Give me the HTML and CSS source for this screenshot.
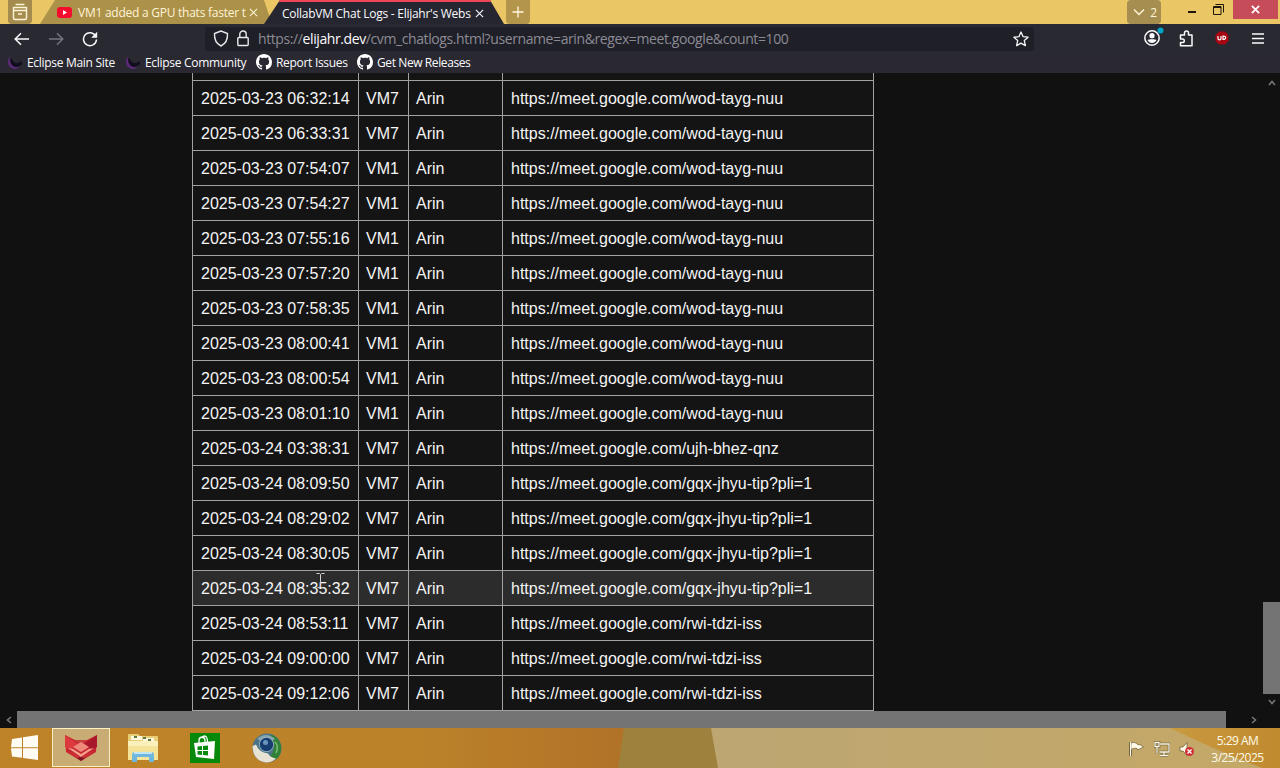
FILE: index.html
```
<!DOCTYPE html>
<html lang="en">
<head>
    <meta charset="UTF-8">
    <meta name="viewport" content="width=device-width, initial-scale=1.0">
    <title>CollabVM Chat Logs - Elijahr's Website</title>
    <link rel="stylesheet" href="styles.css">
</head>
<body>
    <!-- Shared icons -->
    <svg class="defs" width="0" height="0">
        <symbol id="github" viewBox="0 0 16 16">
            <path fill="#fff" d="M8 0C3.58 0 0 3.58 0 8c0 3.54 2.29 6.53 5.47 7.59.4.07.55-.17.55-.38 0-.19-.01-.82-.01-1.49-2.01.37-2.53-.49-2.69-.94-.09-.23-.48-.94-.82-1.13-.28-.15-.68-.52-.01-.53.63-.01 1.08.58 1.23.82.72 1.21 1.87.87 2.33.66.07-.52.28-.87.51-1.07-1.78-.2-3.64-.89-3.64-3.95 0-.87.31-1.59.82-2.15-.08-.2-.36-1.02.08-2.12 0 0 .67-.21 2.2.82.64-.18 1.32-.27 2-.27s1.36.09 2 .27c1.53-1.04 2.2-.82 2.2-.82.44 1.1.16 1.92.08 2.12.51.56.82 1.27.82 2.15 0 3.07-1.87 3.75-3.65 3.95.29.25.54.73.54 1.48 0 1.07-.01 1.93-.01 2.2 0 .21.15.46.55.38A8.01 8.01 0 0 0 16 8c0-4.42-3.58-8-8-8z"/>
        </symbol>
        <symbol id="moon" viewBox="0 0 16 16">
            <path d="M3.500 2Q-1.500 8 3 13q5 4 10 0-5 1-8-2.500Q2 7 3.500 2z" fill="#5b2a78"/>
            <path d="M4 3Q2 9 6 12q5 2.500 9-2 0-2-1-3-2 3-5.500 2Q5 7.500 4 3z" fill="#120c1f"/>
        </symbol>
        <symbol id="close" viewBox="0 0 10 10">
            <path d="M1 1l8 8M9 1l-8 8" stroke="currentColor" stroke-width="1.2" fill="none"/>
        </symbol>
    </svg>

    <!-- Tab strip -->
    <div class="tabbar">
        <div class="recent">
            <svg width="18" height="18" viewBox="0 0 18 18" fill="none" stroke="#fff5d8" stroke-width="1.400" stroke-linejoin="round"><path d="M4.500 1.500h9M2.500 4.500h13v3h-13zM2.500 7.500v7.500q0 1.500 1.500 1.500h10q1.500 0 1.500-1.500V7.500M7 11h4"/></svg>
        </div>
        <div class="tab tab-back">
            <svg width="15" height="11" viewBox="0 0 15 11"><rect width="15" height="11" rx="3" fill="#f50d2d"/><path d="M6 3v5l4-2.5z" fill="#fff"/></svg>
            <span class="tab-title">VM1 added a GPU thats faster t</span>
            <svg class="tab-close" width="9" height="9"><use href="#close"/></svg>
        </div>
        <div class="tab tab-front">
            <span class="tab-title">CollabVM Chat Logs - Elijahr's Webs</span>
            <svg class="tab-close" width="9" height="9"><use href="#close"/></svg>
        </div>
        <div class="newtab">
            <svg width="12" height="12" viewBox="0 0 12 12" stroke="#fff8e0" stroke-width="1.3"><path d="M6 .5v11M.5 6h11"/></svg>
        </div>
        <div class="alltabs">
            <svg width="12" height="8" viewBox="0 0 12 8" fill="none" stroke="#fff5d8" stroke-width="1.4"><path d="M1 1.5l5 5 5-5"/></svg>
            <span>2</span>
        </div>
        <div class="window-buttons">
            <svg width="8" height="24" viewBox="0 0 8 24"><path d="M0 12h8" stroke="#1d160c" stroke-width="2"/></svg>
            <svg class="restore" width="11" height="24" viewBox="0 0 11 24" fill="none" stroke="#1d160c"><path d="M.5 6.500h7.500v8H.5zM.5 7.500h7.500M2.500 4.500h8v8"/></svg>
            <div class="win-close"><svg width="9" height="9" viewBox="0 0 10 10"><path d="M1 1l8 8M9 1l-8 8" stroke="#fff" stroke-width="1.900"/></svg></div>
        </div>
    </div>

    <!-- Navigation -->
    <div class="navbar">
        <div class="nav-left">
            <svg width="16" height="14" viewBox="0 0 16 14" fill="none" stroke="#fbfbfe" stroke-width="1.5"><path d="M15 7H1.5M7 1.2L1.2 7 7 12.8"/></svg>
            <svg width="16" height="14" viewBox="0 0 16 14" fill="none" stroke="#77767e" stroke-width="1.4"><path d="M1 7h13.5M9 1.2L14.8 7 9 12.8"/></svg>
            <svg width="16" height="16" viewBox="0 0 16 16"><path d="M13.7 5A6.5 6.5 0 1 0 14.5 8.5" fill="none" stroke="#fbfbfe" stroke-width="1.5"/><path d="M15.2.8v6H9.2z" fill="#fbfbfe"/></svg>
        </div>
        <div class="urlbar">
            <svg width="16" height="17" viewBox="0 0 16 17" fill="none" stroke="#e8e8ee" stroke-width="1.4"><path d="M8 1L1.5 3.5C1.2 9 3 13.5 8 16c5-2.5 6.8-7 6.5-12.5z"/></svg>
            <svg width="12" height="17" viewBox="0 0 12 17" fill="none" stroke="#e8e8ee" stroke-width="1.4"><rect x=".8" y="7.5" width="10.4" height="8" rx="1"/><path d="M2.8 7.5V4.2a3.2 3.2 0 0 1 6.4 0v3.3"/></svg>
            <span class="url">https://<b>elijahr.dev</b>/cvm_chatlogs.html?username=arin&amp;regex=meet.google&amp;count=100</span>
            <svg class="star" width="16" height="16" viewBox="0 0 16 16" fill="none" stroke="#f4f4fa" stroke-width="1.3" stroke-linejoin="round"><path d="M8 1l2.1 4.7 5 .5-3.8 3.4 1.1 5L8 12.1l-4.4 2.5 1.1-5L.9 6.2l5-.5z"/></svg>
        </div>
        <div class="nav-right">
            <svg class="account" width="20" height="20" viewBox="0 0 20 20"><circle cx="8" cy="11" r="7.2" fill="none" stroke="#fbfbfe" stroke-width="1.5"/><circle cx="8" cy="8.7" r="2.6" fill="#fbfbfe"/><path d="M3.5 13c1-1 8-1 9 0-1 2-2.500 3-4.500 3s-3.500-1-4.500-3z" fill="#fbfbfe"/><circle cx="16.500" cy="3.500" r="3" fill="#00a5c5"/></svg>
            <svg class="extensions" width="15" height="17" viewBox="0 0 15 17" fill="none" stroke="#fbfbfe" stroke-width="1.500" stroke-linejoin="round"><path d="M1.500 5h4V3a2 2 0 0 1 4 0v2H13v10.800H1.500V12.500H3.500a1.800 1.800 0 0 0 0-3.600H1.500z"/></svg>
            <svg class="ublock" width="14" height="14" viewBox="0 0 14 14"><path d="M4 .5h6L13.500 4v6L10 13.500H4L.5 10V4z" fill="#a50612"/><path d="M3 5v2.500c0 1.800 3 1.800 3 0V5M8 5v3.500c3.500.3 3.500-3.800 0-3.500z" fill="none" stroke="#fff" stroke-width="1.200"/></svg>
            <svg class="menu" width="12" height="11" viewBox="0 0 12 11" stroke="#fbfbfe" stroke-width="1.3"><path d="M0 1h12M0 5.5h12M0 10h12"/></svg>
        </div>
    </div>

    <div class="bookmarks">
        <div class="bookmark b1"><svg width="16" height="16"><use href="#moon"/></svg><span>Eclipse Main Site</span></div>
        <div class="bookmark b2"><svg width="16" height="16"><use href="#moon"/></svg><span>Eclipse Community</span></div>
        <div class="bookmark b3"><svg width="16" height="16"><use href="#github"/></svg><span>Report Issues</span></div>
        <div class="bookmark b4"><svg width="16" height="16"><use href="#github"/></svg><span>Get New Releases</span></div>
    </div>

    <!-- Chat log page -->
    <div class="page">
        <div class="content">
            <table>
                <colgroup><col class="c-time"><col class="c-vm"><col class="c-user"><col class="c-msg"></colgroup>
                <tbody>
                    <tr><td></td><td></td><td></td><td></td></tr>
                    <tr><td>2025-03-23 06:32:14</td><td>VM7</td><td>Arin</td><td>https://meet.google.com/wod-tayg-nuu</td></tr>
                    <tr><td>2025-03-23 06:33:31</td><td>VM7</td><td>Arin</td><td>https://meet.google.com/wod-tayg-nuu</td></tr>
                    <tr><td>2025-03-23 07:54:07</td><td>VM1</td><td>Arin</td><td>https://meet.google.com/wod-tayg-nuu</td></tr>
                    <tr><td>2025-03-23 07:54:27</td><td>VM1</td><td>Arin</td><td>https://meet.google.com/wod-tayg-nuu</td></tr>
                    <tr><td>2025-03-23 07:55:16</td><td>VM1</td><td>Arin</td><td>https://meet.google.com/wod-tayg-nuu</td></tr>
                    <tr><td>2025-03-23 07:57:20</td><td>VM1</td><td>Arin</td><td>https://meet.google.com/wod-tayg-nuu</td></tr>
                    <tr><td>2025-03-23 07:58:35</td><td>VM1</td><td>Arin</td><td>https://meet.google.com/wod-tayg-nuu</td></tr>
                    <tr><td>2025-03-23 08:00:41</td><td>VM1</td><td>Arin</td><td>https://meet.google.com/wod-tayg-nuu</td></tr>
                    <tr><td>2025-03-23 08:00:54</td><td>VM1</td><td>Arin</td><td>https://meet.google.com/wod-tayg-nuu</td></tr>
                    <tr><td>2025-03-23 08:01:10</td><td>VM1</td><td>Arin</td><td>https://meet.google.com/wod-tayg-nuu</td></tr>
                    <tr><td>2025-03-24 03:38:31</td><td>VM7</td><td>Arin</td><td>https://meet.google.com/ujh-bhez-qnz</td></tr>
                    <tr><td>2025-03-24 08:09:50</td><td>VM7</td><td>Arin</td><td>https://meet.google.com/gqx-jhyu-tip?pli=1</td></tr>
                    <tr><td>2025-03-24 08:29:02</td><td>VM7</td><td>Arin</td><td>https://meet.google.com/gqx-jhyu-tip?pli=1</td></tr>
                    <tr><td>2025-03-24 08:30:05</td><td>VM7</td><td>Arin</td><td>https://meet.google.com/gqx-jhyu-tip?pli=1</td></tr>
                    <tr class="hovered"><td>2025-03-24 08:35:32</td><td>VM7</td><td>Arin</td><td>https://meet.google.com/gqx-jhyu-tip?pli=1</td></tr>
                    <tr><td>2025-03-24 08:53:11</td><td>VM7</td><td>Arin</td><td>https://meet.google.com/rwi-tdzi-iss</td></tr>
                    <tr><td>2025-03-24 09:00:00</td><td>VM7</td><td>Arin</td><td>https://meet.google.com/rwi-tdzi-iss</td></tr>
                    <tr><td>2025-03-24 09:12:06</td><td>VM7</td><td>Arin</td><td>https://meet.google.com/rwi-tdzi-iss</td></tr>
                </tbody>
            </table>
        </div>
        <div class="vscroll">
            <svg width="8" height="6" viewBox="0 0 8 6" fill="none" stroke="#77777a" stroke-width="1.6"><path d="M1 5l3-3.5L7 5"/></svg>
            <div class="vthumb"></div>
            <svg width="8" height="6" viewBox="0 0 8 6" fill="none" stroke="#77777a" stroke-width="1.6"><path d="M1 1l3 3.5L7 1"/></svg>
        </div>
        <div class="hscroll">
            <svg width="6" height="8" viewBox="0 0 6 8" fill="none" stroke="#77777a" stroke-width="1.6"><path d="M5 1L1.5 4 5 7"/></svg>
            <div class="hthumb"></div>
            <svg width="6" height="8" viewBox="0 0 6 8" fill="none" stroke="#77777a" stroke-width="1.6"><path d="M1 1l3.5 3L1 7"/></svg>
        </div>
    </div>

    <!-- Mouse pointer -->
    <svg class="cursor" width="9" height="17" viewBox="0 0 9 17" fill="none" stroke="#d0d0d0"><path d="M.5 1.5h3l1 1 1-1h3M4.5 2.5v12M1.5 15.5h2l1-1 1 1h2"/></svg>

    <!-- Taskbar -->
    <div class="taskbar">
        <svg class="wallpaper" width="1280" height="40" viewBox="0 0 1280 40" preserveAspectRatio="none">
            <defs>
                <linearGradient id="orange"><stop offset="0" stop-color="#be8328"/><stop offset=".65" stop-color="#bc822a"/><stop offset="1" stop-color="#b07127"/></linearGradient>
                <linearGradient id="sand"><stop offset="0" stop-color="#bda672"/><stop offset="1" stop-color="#c4a867"/></linearGradient>
                <linearGradient id="gold"><stop offset="0" stop-color="#c99a40"/><stop offset="1" stop-color="#c08a2f"/></linearGradient>
            </defs>
            <path d="M0 0h640v40H0z" fill="url(#orange)"/>
            <path d="M624 0h100v40H618z" fill="#9d813d"/>
            <path d="M711 0h569v40H718z" fill="url(#sand)"/>
            <path d="M1170 0h110v40h-18Q1220 24 1170 0z" fill="url(#gold)"/>
        </svg>
        <div class="task start">
            <svg width="27" height="26" viewBox="0 0 27 26" fill="#fffdf3"><path d="M1 4l10-1.5v9.7H0zM12 2.3L27 0v12.2H12zM0 13.2h11v9.6L1 21.5zM12 13.2h15V25l-15-2z"/></svg>
        </div>
        <div class="task active">
            <svg width="34" height="28" viewBox="0 0 34 28">
                <path d="M1 1l10 5h12l10-5-1 17-15 9L2 18z" fill="#c62732"/>
                <path d="M1 1l13 9-8 6-5-3z" fill="#dd3a40"/><path d="M33 1l-13 9 8 6 5-3z" fill="#a9182a"/>
                <path d="M11 6h12l-6 5z" fill="#c9403e"/>
                <path d="M4 14l5 1 8 5 8-5 5-1-13 9z" fill="#f4a08a"/>
                <path d="M9 13l8-5 8 5-8 5z" fill="#ef8a7a"/><path d="M4 17l13 7 13-7-13 9z" fill="#d7363b"/><path d="M13 24l4 3 4-3-4-1z" fill="#7b1722"/>
            </svg>
        </div>
        <div class="task">
            <svg width="32" height="30" viewBox="0 0 32 30">
                <path d="M1 2q0-1 1-1h9l2 2h17q1 0 1 1v23H1z" fill="#e9ce78"/>
                <path d="M4 3h11v4H4zM16 5h11v3H16z" fill="#fff9df"/><path d="M7 4h3M16 5h3M21 7h3" stroke="#5a7a42" stroke-width="2"/>
                <path d="M1 8h30v19H1z" fill="#f6e39a"/><path d="M1 8h30v5H1z" fill="#fbf0bb"/>
                <path d="M5 29v-7q0-3 3-3h16q3 0 3 3v7h-5v-5H10v5z" fill="#6fb7dd"/><path d="M7 20h18" stroke="#c1e7f5" stroke-width="2"/>
            </svg>
        </div>
        <div class="task">
            <svg width="30" height="30" viewBox="0 0 30 30">
                <path d="M0 0h30v30H0z" fill="#078a0b"/>
                <path d="M9 10V7.500q0-3 3-3.500 3 .5 3 3.500v2M12 5q1-2 3-2 2.500 1 2.500 6" fill="none" stroke="#fff" stroke-width="1.3"/>
                <path d="M4 10l21-2-1 18-18-2z" fill="#fff"/>
                <path d="M7.500 13.5l4.500-.5v4H7.500zM13 12.900l5-.4V17h-5zM7.500 18H12v4l-4.500-.5zM13 18h5v4.500l-5-.4z" fill="#078a0b"/>
            </svg>
        </div>
        <div class="task">
            <svg width="32" height="32" viewBox="0 0 32 32">
                <circle cx="16" cy="16" r="14.500" fill="#4c7489"/>
                <path d="M20 2.500a14.500 14.500 0 0 1 6 24q-5 3-8-1 7-7 4-14z" fill="#2f8237"/>
                <path d="M24 10q4 4 1 11" fill="none" stroke="#82ba78" stroke-width="1.500"/>
                <path d="M1.500 14Q2 29 15 30.500q6 0 10-4-6-1-8-5-9-1-12-9z" fill="#e7e3d4"/>
                <path d="M6 7q9-8 18 0l-5 3-9-1z" fill="#87a6ae"/>
                <circle cx="15.500" cy="12.500" r="7.500" fill="#9eb8c5"/><circle cx="15.500" cy="12.500" r="6.700" fill="#173e70"/><circle cx="14.500" cy="10.500" r="2.500" fill="#6995bd"/>
            </svg>
        </div>
        <div class="tray">
            <svg width="16" height="16" viewBox="0 0 16 16"><path d="M1.5 1v14" stroke="#5c4b28" stroke-width="3"/><path d="M2 2q3-1.5 6 .5l.5 1q3-.5 6 2.500l-6 3-.5-1.500Q5 6.500 2 8.500z" fill="#fffbe8" stroke="#6e5b33" stroke-width=".7"/><path d="M1.5 1v14" stroke="#fffbe8" stroke-width="1.3"/></svg>
            <svg width="16" height="16" viewBox="0 0 16 16" fill="none"><path d="M6 3h9v8H5.500M10 11v3M6 14.500h8M1 1.500h4v4H1zM3 5.500v7" stroke="#574828" stroke-width="2.4"/><path d="M6 3h9v8H5.500M10 11v3M6 14.500h8M1 1.500h4v4H1zM3 5.500v7" stroke="#fffbe8" stroke-width="1.3"/></svg>
            <svg width="16" height="16" viewBox="0 0 16 16"><path d="M1 6h3l4-4.500v13L4 10H1z" fill="#fffbe8" stroke="#67552f" stroke-width=".7"/><circle cx="10.5" cy="10.5" r="4.500" fill="#cf3034"/><path d="M8.500 8.500l4 4M12.500 8.500l-4 4" stroke="#fff" stroke-width="1.4"/></svg>
        </div>
        <div class="clock"><span>5:29 AM</span><span>3/25/2025</span></div>
    </div>
</body>
</html>
```
FILE: styles.css
```
* {
    box-sizing: border-box;
    margin: 0;
    padding: 0;
}

body {
    width: 1280px;
    height: 768px;
    overflow: hidden;
    display: flex;
    flex-direction: column;
    background-color: #111;
    color: #fbfbfe;
    font-family: "Open Sans", "Noto Sans", sans-serif;
    font-size: 12px;
}

svg {
    display: block;
    flex: none;
}

.defs {
    position: absolute;
}

/* Tab strip */
.tabbar {
    height: 24px;
    flex: none;
    display: flex;
    background-color: #ebc664;
}

.recent {
    width: 24px;
    margin-left: 8px;
    padding: 3px 3px;
    background-color: #a48b4e;
    border-radius: 0 0 4px 4px;
}

.tab {
    height: 24px;
    display: flex;
    align-items: center;
    white-space: nowrap;
}

.tab-title {
    line-height: 25px;
    letter-spacing: -0.25px;
}

.tab-back {
    width: 232px;
    margin-left: 8px;
    padding-left: 17px;
    background-color: #ac9149;
    color: #fff4d7;
    clip-path: polygon(15px 0, 224px 0, 100% 100%, 0 100%);
}

.tab-back .tab-title {
    width: 168px;
    margin-left: 6px;
}

.tab-front {
    width: 240px;
    margin-left: -8px;
    padding-left: 18px;
    background-color: #252630;
    border-top: 2px solid #ed4658;
    clip-path: polygon(16px 0, 226px 0, 100% 100%, 0 100%);
}

.tab-front .tab-title {
    width: 190px;
    line-height: 23px;
    letter-spacing: -0.26px;
}

.tab-close {
    margin-left: 3px;
}

.newtab {
    width: 24px;
    margin-left: 2px;
    padding: 6px;
    background-color: #b3964b;
    border-radius: 0 0 4px 4px;
}

.alltabs {
    width: 34px;
    margin-left: auto;
    padding: 0 4px 0 6px;
    display: flex;
    align-items: center;
    justify-content: space-between;
    background-color: #a68e51;
    color: #fff5d8;
    border-radius: 4px;
}

.window-buttons {
    width: 119px;
    padding: 0 2px 0 27px;
    display: flex;
}

.restore {
    margin-left: 17px;
}

.win-close {
    width: 45px;
    height: 19px;
    margin-left: auto;
    padding: 5px 18px;
    background-color: #c54c58;
}

/* Navigation bar */
.navbar {
    height: 29px;
    flex: none;
    display: flex;
    align-items: center;
    background-color: #292932;
}

.nav-left {
    width: 205px;
    padding-left: 14px;
    display: flex;
    gap: 18px;
    align-items: center;
}

.urlbar {
    width: 829px;
    height: 24px;
    padding: 0 5px 0 8px;
    display: flex;
    align-items: center;
    gap: 8px;
    background-color: #1f1f28;
    border-radius: 2px;
}

.url {
    margin-left: 1px;
    color: #8c8b94;
    font-size: 14px;
    letter-spacing: -0.4px;
    white-space: nowrap;
}

.url b {
    color: #fbfbfe;
    font-weight: normal;
}

.star {
    margin-left: auto;
}

.nav-right {
    margin-left: auto;
    padding-right: 16px;
    display: flex;
    align-items: center;
}

.account {
    margin-top: -3px;
}

.extensions {
    margin: -1px 0 0 15px;
}

.ublock {
    margin: -2px 0 0 21px;
}

.menu {
    margin-left: 23px;
}

.bookmarks {
    height: 20px;
    flex: none;
    padding: 0 0 2px 7px;
    display: flex;
    align-items: center;
    background-color: #2a2931;
}

.bookmark {
    display: flex;
    align-items: center;
    gap: 4px;
    white-space: nowrap;
    letter-spacing: -0.3px;
}

.b1 {
    width: 118px;
}

.b2 {
    width: 131px;
}

.b3 {
    width: 101px;
}

.b4 {
    letter-spacing: -0.4px;
}

/* Page and scrollbars */
.page {
    height: 655px;
    flex: none;
    display: grid;
    grid-template-columns: 1fr 17px;
    grid-template-rows: 638px 17px;
    background-color: #111;
}

.content {
    overflow: hidden;
    padding-left: 192px;
}

table {
    width: 682px;
    margin-top: -28px;
    table-layout: fixed;
    border-collapse: collapse;
    font-family: "Liberation Sans", Arial, sans-serif;
    font-size: 16px;
    color: #f5f5f5;
    background-color: #141414;
}

tr {
    height: 35px;
}

.hovered {
    background-color: #2c2c2c;
}

td {
    border: 1px solid #a2a2a2;
    padding: 2px 8px 0;
    line-height: 32px;
    white-space: nowrap;
}

td:nth-child(2),
td:nth-child(3) {
    padding: 2px 7px 0;
}

.c-time {
    width: 166px;
}

.c-vm {
    width: 50px;
}

.c-user {
    width: 94px;
}

.vscroll {
    display: flex;
    flex-direction: column;
    align-items: center;
    padding: 7px 0 6px;
}

.vthumb {
    width: 17px;
    height: 92px;
    margin-top: auto;
    margin-bottom: 5px;
    background-color: #747474;
}

.hscroll {
    grid-column: 1 / 3;
    display: flex;
    align-items: center;
    padding-left: 6px;
}

.hthumb {
    width: 1209px;
    height: 17px;
    margin: 0 25px 0 5px;
    background-color: #747474;
}

.cursor {
    position: absolute;
    left: 316px;
    top: 572px;
}

/* Taskbar */
.taskbar {
    height: 40px;
    flex: none;
    display: flex;
    position: relative;
}

.wallpaper {
    position: absolute;
    left: 0;
    top: 0;
}

.task {
    width: 58px;
    margin-right: 4px;
    display: flex;
    align-items: center;
    justify-content: center;
    position: relative;
}

.start {
    width: 48px;
}

.active {
    height: 39px;
    border: 1px solid #fff0c6;
    background-color: #c9ac74;
}

.tray {
    margin-left: auto;
    width: 78px;
    padding-top: 2px;
    display: flex;
    align-items: center;
    gap: 9px;
    position: relative;
}

.clock {
    width: 61px;
    margin-right: 12px;
    padding-top: 1px;
    display: flex;
    flex-direction: column;
    align-items: center;
    justify-content: center;
    line-height: 17px;
    letter-spacing: -0.5px;
    color: #fffbe9;
    position: relative;
}
```
